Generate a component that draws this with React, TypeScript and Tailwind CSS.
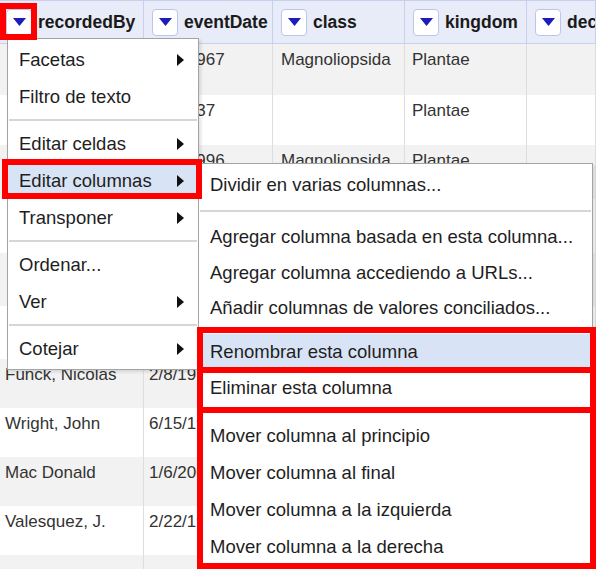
import type { ReactNode } from 'react'

const widths = ['w-[144px]', 'w-[129px]', 'w-[132px]', 'w-[122px]', 'flex-1']
const headers = ['recordedBy', 'eventDate', 'class', 'kingdom', 'decimalLatitude']
const pads = ['pl-[5px]', 'pl-[5px]', 'pl-[8px]', 'pl-[7px]', 'pl-[7px]']

// names of the first rows sit under the open menu
const rows = [
    { h: 'h-[51px]', cells: ['', '8/12/1967', 'Magnoliopsida', 'Plantae', ''] },
    { h: 'h-[50px]', cells: ['', '3/2/1937', '', 'Plantae', ''] },
    { h: 'h-[54px]', cells: ['', '5/10/1996', 'Magnoliopsida', 'Plantae', ''] },
    { h: 'h-[54px]', cells: ['', '4/3/1988', 'Liliopsida', 'Plantae', ''] },
    { h: 'h-[53px]', cells: ['', '7/9/1975', 'Magnoliopsida', 'Plantae', ''] },
    { h: 'h-[53px]', cells: ['', '9/1/1950', '', 'Plantae', ''] },
    { h: 'h-[49px]', cells: ['Funck, Nicolas', '2/8/1917', 'Magnoliopsida', 'Plantae', ''] },
    { h: 'h-[49px]', cells: ['Wright, John', '6/15/1921', 'Magnoliopsida', 'Plantae', ''] },
    { h: 'h-[49px]', cells: ['Mac Donald', '1/6/2001', 'Liliopsida', 'Plantae', ''] },
    { h: 'h-[49px]', cells: ['Valesquez, J.', '2/22/1912', 'Magnoliopsida', 'Plantae', ''] },
    { h: 'h-[49px]', cells: ['', '', '', '', ''] },
]

function DropButton() {
    return (
        <div className="flex h-[27px] w-[26px] shrink-0 items-center justify-center rounded-[4px] border border-[#bcc5ec] bg-white">
            <svg width="13" height="8" viewBox="0 0 13 8">
                <polygon points="0,0 13,0 6.5,8" fill="#1c1cbd" />
            </svg>
        </div>
    )
}

function Arrow() {
    return (
        <svg width="7" height="12" viewBox="0 0 7 12">
            <polygon points="0,0 7,6 0,12" fill="#111" />
        </svg>
    )
}

function Item({ label, sub, active, h = 'h-[37px]' }: { label: string; sub?: boolean; active?: boolean; h?: string }) {
    return (
        <div className={`flex ${h} items-center justify-between pl-[11px] pr-[14px] ${active ? 'bg-[#d8e4f5]' : ''}`}>
            <span>{label}</span>
            {sub && <Arrow />}
        </div>
    )
}

function Sep({ h = 'h-[10px]' }: { h?: string }) {
    return (
        <div className={`flex ${h} items-center px-[1px]`}>
            <div className="h-[2px] w-full bg-[#d6d6d6]" />
        </div>
    )
}

function RedBox({ cls }: { cls: string }) {
    return <div className={`pointer-events-none absolute border-[6px] border-[#ff0000] ${cls}`} />
}

function Menu({ cls, children }: { cls: string; children: ReactNode }) {
    return (
        <div className={`absolute border border-[#a3a3a3] bg-white py-[2px] text-[18.5px] text-[#1e1e1e] shadow-[2px_2px_3px_rgba(0,0,0,0.12)] ${cls}`}>
            {children}
        </div>
    )
}

export default function App() {
    return (
        <div className="relative h-[569px] w-[596px] overflow-hidden bg-white font-['Liberation_Sans',Arial,sans-serif]">
            {/* header */}
            <div className="flex h-[44px] border-y border-[#c9d0ee] bg-[#e8ebf8]">
                {headers.map((t, i) => (
                    <div key={t} className={`${widths[i]} flex shrink-0 items-center gap-[6px] overflow-hidden whitespace-nowrap border-r border-[#c9d0ee] ${i === 0 ? 'pl-[6px]' : 'pl-[8px]'}`}>
                        <DropButton />
                        <span className="text-[17.5px] font-bold text-[#1a1a1a]">{t}</span>
                    </div>
                ))}
            </div>

            {/* body */}
            {rows.map((r, ri) => (
                <div key={ri} className={`flex ${r.h} ${ri % 2 === 0 ? 'bg-[#f2f2f2]' : 'bg-white'}`}>
                    {r.cells.map((c, ci) => (
                        <div key={ci} className={`${widths[ci]} ${pads[ci]} shrink-0 overflow-hidden whitespace-nowrap border-r border-[#dedede] pt-[5px] text-[17px] leading-[22px] text-[#333]`}>
                            {c}
                        </div>
                    ))}
                </div>
            ))}

            {/* column menu */}
            <Menu cls="left-[7px] top-[38px] w-[192px]">
                <Item label="Facetas" sub />
                <Item label="Filtro de texto" />
                <Sep />
                <Item label="Editar celdas" sub />
                <Item label="Editar columnas" sub active />
                <Item label="Transponer" sub />
                <Sep />
                <Item label="Ordenar..." />
                <Item label="Ver" sub />
                <Sep />
                <Item label="Cotejar" sub />
            </Menu>

            {/* submenu */}
            <Menu cls="left-[198px] top-[163px] w-[395px]">
                <Item label="Dividir en varias columnas..." />
                <Sep h="h-[16px]" />
                <Item label="Agregar columna basada en esta columna..." h="h-[36px]" />
                <Item label="Agregar columna accediendo a URLs..." h="h-[35px]" />
                <Item label="Añadir columnas de valores conciliados..." h="h-[35px]" />
                <Sep h="h-[9px]" />
                <Item label="Renombrar esta columna" h="h-[36px]" active />
                <Item label="Eliminar esta columna" h="h-[36px]" />
                <Sep h="h-[11px]" />
                <Item label="Mover columna al principio" />
                <Item label="Mover columna al final" />
                <Item label="Mover columna a la izquierda" />
                <Item label="Mover columna a la derecha" />
            </Menu>

            {/* annotation boxes */}
            <RedBox cls="left-0 top-[3px] h-[37px] w-[37px] border-[5px]" />
            <RedBox cls="left-[2px] top-[159px] h-[40px] w-[200px]" />
            <RedBox cls="left-[197px] top-[327px] h-[46px] w-[399px]" />
            <RedBox cls="left-[197px] top-[367px] h-[46px] w-[399px]" />
            <RedBox cls="left-[197px] top-[407px] h-[162px] w-[399px]" />
        </div>
    )
}
